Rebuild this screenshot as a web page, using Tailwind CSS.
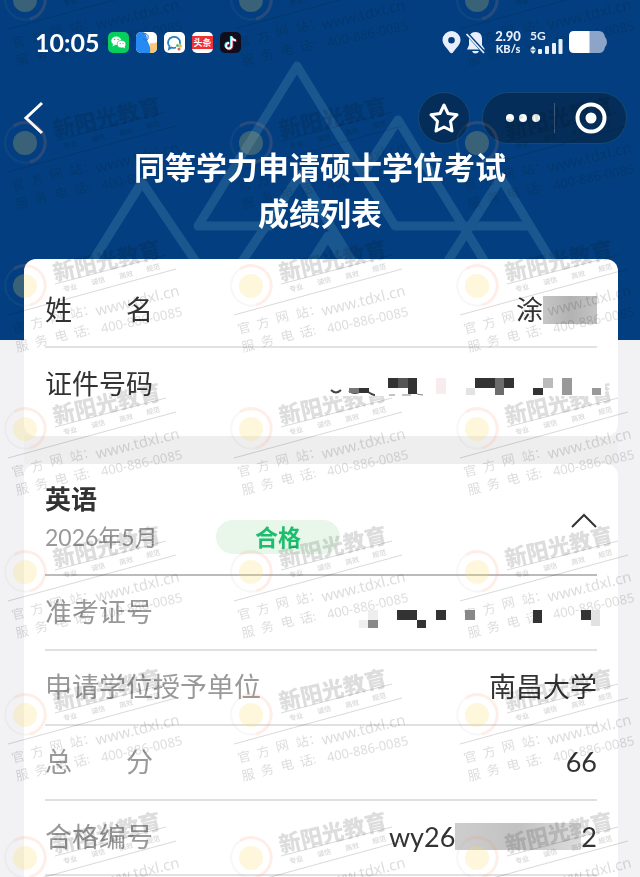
<!doctype html>
<html lang="zh-CN">
  <head>
    <meta charset="UTF-8" />
    <meta name="viewport" content="width=device-width, initial-scale=1.0" />
    <title>同等学力申请硕士学位考试成绩列表</title>
    <script src="https://cdn.jsdelivr.net/npm/@tailwindcss/browser@4"></script>
  </head>
  <body
    class="relative flex min-h-screen flex-col overflow-x-hidden bg-[#f2f2f4] font-['Lato','Noto_Sans_CJK_SC',sans-serif] text-[#333]"
  >
    <header class="relative bg-[#033f80] pb-[104px] text-white">
      <!-- triangle pattern behind the title -->
      <svg
        class="absolute inset-0 h-full w-full"
        viewBox="0 0 640 340"
        preserveAspectRatio="xMidYMin slice"
        fill="none"
        stroke="#1b578f"
        stroke-width="9"
        stroke-linejoin="round"
        aria-hidden="true"
      >
        <path d="M272 226H198L297 66L395 226H528" />
        <path d="M84 275L142 182L205 275" />
        <path d="M233 275L300 175L360 275" />
        <path d="M305 272L328 236L350 272" />
        <path d="M364 172L398 120L493 275" />
        <path d="M439 275L501 178L560 275" />
      </svg>

      <div class="relative z-20 flex h-[92px] items-center justify-between pr-[33px] pb-2 pl-[35px]">
        <div class="flex items-center gap-[7px]">
          <span class="mr-0.5 text-[25px] leading-none font-bold">10:05</span>
          <!-- WeChat -->
          <svg class="size-[21px]" viewBox="0 0 21 21">
            <rect width="21" height="21" rx="5" fill="#06cf5c" />
            <ellipse cx="8.300" cy="8.800" rx="5" ry="4.300" fill="#fff" />
            <path d="M5 12L4.500 14.500L7.500 12.800Z" fill="#fff" />
            <ellipse cx="13.500" cy="12.200" rx="4.300" ry="3.700" fill="#fff" stroke="#06cf5c" stroke-width=".7" />
            <path d="M15 15L17 16.500L16.500 14Z" fill="#fff" />
            <g fill="#06cf5c">
              <circle cx="6.700" cy="7.500" r=".7" />
              <circle cx="10" cy="7.500" r=".7" />
              <circle cx="12.200" cy="11.300" r=".6" />
              <circle cx="15" cy="11.300" r=".6" />
            </g>
          </svg>
          <svg class="size-[21px]" viewBox="0 0 21 21">
            <defs>
              <clipPath id="tile"><rect width="21" height="21" rx="5" /></clipPath>
            </defs>
            <g clip-path="url(#tile)">
              <rect width="21" height="21" fill="#fff" />
              <path d="M14 21V11Q18 12 21 10V21Z" fill="#f8c777" />
              <path d="M0 0H5C9 0 11 3 11 8C13 12 15 15 14 21H0Z" fill="#258bf3" />
              <path d="M6 1C10 1 13 3 12 6C12 9 8 9 7.500 6.500" fill="none" stroke="#2d6fc0" stroke-width="1" />
            </g>
          </svg>
          <svg class="size-[21px]" viewBox="0 0 21 21">
            <rect width="21" height="21" rx="5" fill="#fff" />
            <path d="M12 15.500Q9 16.500 7.500 15.500L5 17L5.500 14A6 5.500 0 1 1 16 11" fill="none" stroke="#257fc0" stroke-width="1.700" />
            <circle cx="13.500" cy="13.500" r="1.500" fill="#56bb62" />
            <circle cx="16.500" cy="14" r="1.500" fill="#f5b32d" />
            <circle cx="15" cy="17" r="1.500" fill="#e66048" />
            <circle cx="16" cy="11.800" r="1" fill="#36a3dc" />
          </svg>
          <svg class="size-[21px]" viewBox="0 0 21 21">
            <rect width="21" height="21" rx="5" fill="#fff" />
            <rect y="4" width="21" height="13" fill="#ed2f36" />
            <text x="10.500" y="14" text-anchor="middle" font-size="9" font-weight="700" fill="#fff">头条</text>
          </svg>
          <svg class="size-[21px]" viewBox="0 0 21 21" fill="none" stroke-width="2.200">
            <rect width="21" height="21" rx="5" fill="#120d1b" />
            <path d="M11 4V13.500A2.800 2.800 0 1 1 8.500 10.500M11 4.500Q12 8 15.500 8" stroke="#31dfe0" />
            <path d="M12.200 5V14.500A2.800 2.800 0 1 1 9.700 11.500M12.200 5.500Q13 8.800 16.500 8.800" stroke="#ee3057" />
            <path d="M11.600 4.500V14A2.800 2.800 0 1 1 9.100 11M11.600 5Q12.500 8.400 16 8.400" stroke="#fff" stroke-width="1.800" />
          </svg>
        </div>

        <div class="flex items-center gap-1 text-[#e8effa]">
          <svg class="h-[23px] w-[19px]" viewBox="0 0 19 23" fill="currentColor">
            <path fill-rule="evenodd" d="M9.500 0A9 9 0 0 1 18.500 9C18.500 14 13 18 11 21.500Q9.500 23 8 21.500C6 18 .5 14 .5 9A9 9 0 0 1 9.500 0ZM9.500 6A3.300 3.300 0 1 0 9.500 12.600A3.300 3.300 0 0 0 9.500 6Z" />
          </svg>
          <svg class="h-[23px] w-[21px]" viewBox="0 0 21 23">
            <path d="M10.500 1C15 1 17 4 17 8V14L20 18.500H2L4 14V8C4 4 6 1 10.500 1Z" fill="currentColor" />
            <path d="M7 20H14Q13 22.500 10.500 22.500T7 20Z" fill="currentColor" />
            <path d="M0 .5L20 22.500" stroke="#033f80" stroke-width="3.500" />
            <path d="M1.500 3L19 22" stroke="currentColor" stroke-width="1.700" />
          </svg>
          <div class="ml-1 flex w-7 flex-col items-center font-black whitespace-nowrap">
            <span class="text-[13px] leading-[13px]">2.90</span>
            <span class="text-[11px] leading-[11px]">KB/s</span>
          </div>
          <div class="ml-1 flex flex-col">
            <span class="text-[12px] leading-[12px] font-bold">5G</span>
            <svg class="-mt-1 h-[16px] w-[33px]" viewBox="0 0 33 16" fill="currentColor">
              <path d="M0 11.500L3 8L6 11.500ZM0 12.500L3 16L6 12.500Z" />
              <rect x="8" y="11" width="4" height="5" rx="1" />
              <rect x="15" y="8" width="4" height="8" rx="1" />
              <rect x="22" y="5" width="4" height="11" rx="1" />
              <rect x="28.500" y="1" width="4" height="15" rx="1" />
            </svg>
          </div>
          <svg class="ml-0.5 h-[22px] w-[38px]" viewBox="0 0 38 22">
            <path d="M20 0H30Q35 0 36 6Q38 8 38 11T36 16Q35 22 30 22H20Z" fill="#8ba4c7" />
            <path d="M20.500 0H5Q0 0 0 5V17Q0 22 5 22H20.500Z" fill="#fff" />
          </svg>
        </div>
      </div>

      <nav class="relative flex h-[52px] items-center pr-[13px] pl-[22px]">
        <button type="button" aria-label="返回">
          <svg class="h-[34px] w-[22px]" viewBox="0 0 22 34" fill="none" stroke="#fff" stroke-width="3">
            <path d="M20 2L4 17L20 32" />
          </svg>
        </button>
        <button
          type="button"
          aria-label="收藏"
          class="ml-auto flex size-[52px] items-center justify-center rounded-full border border-[#174875] bg-[#042e59]"
        >
          <svg class="size-8" viewBox="0 0 32 32" fill="none" stroke="#fff" stroke-width="3" stroke-linejoin="round">
            <path d="M16 3L20 11.500L29 12.800L22.500 19.300L24 29L16 25L8 29L9.500 19.300L3 12.800L12 11.500Z" />
          </svg>
        </button>
        <div class="ml-3 flex h-[52px] w-[145px] items-center rounded-full border border-[#174875] bg-[#042e59]">
          <button type="button" aria-label="更多" class="flex h-full w-[71px] items-center justify-center gap-[5px] pl-2">
            <span class="size-2 rounded-full bg-white"></span>
            <span class="size-2 rounded-full bg-white"></span>
            <span class="size-2 rounded-full bg-white"></span>
          </button>
          <span class="h-[30px] w-px bg-[#3a5c80]"></span>
          <button type="button" aria-label="关闭" class="flex h-full flex-1 items-center justify-center">
            <svg class="relative z-20 size-8" viewBox="0 0 32 32">
              <circle cx="16" cy="16" r="13.500" fill="none" stroke="#fff" stroke-width="4" />
              <circle cx="16" cy="16" r="5.500" fill="#fff" />
            </svg>
          </button>
        </div>
      </nav>

      <h1 class="relative z-20 text-center text-[31px] leading-[46px] font-bold">
        同等学力申请硕士学位考试<br />成绩列表
      </h1>
    </header>

    <main class="relative -mt-[81px] flex flex-1 flex-col pr-[22px] pl-6">
      <section class="rounded-xl bg-white px-[21px] pt-[14px] pb-[17px]">
        <dl class="text-[27px] leading-10">
          <div class="flex h-[75px] items-center justify-between border-b-2 border-[#e2e2e2]">
            <dt class="flex w-[108px] justify-between"><span>姓</span><span>名</span></dt>
            <dd class="flex items-center">
              涂<span class="h-7 w-[54px] bg-linear-to-r from-[#c6c6c6] via-[#b2b2b2] to-[#c4c4c4]"></span>
            </dd>
          </div>
          <div class="flex h-[71px] items-center justify-between">
            <dt>证件号码</dt>
            <dd class="relative z-20 -mr-2">
              <svg class="h-7 w-[278px]" viewBox="0 2 278 28" aria-label="已隐藏">
                <rect width="278" height="28" fill="#fff" />
                <path d="M4 22Q9 27 14 22M22 23Q28 27 34 23M40 23Q45 27 48 27" fill="none" stroke="#444" stroke-width="2" />
                <path d="M62 27H68M75 27H84M90 26Q95 27 96 27" stroke="#888" />
                <path d="M22 20H32V25H22Z" fill="#777" />
                <path d="M32 20H42V25H32ZM61 10H71V20H61ZM81 10H90V26H81ZM148 10H168V20H148ZM177 10H187V20H177ZM206 20H216V27H206Z" fill="#333" />
                <path d="M71 10H81V20H71Z" fill="#555" />
                <path d="M109 10H119V26H109Z" fill="#f7ecee" />
                <path d="M139 20H148V27H139Z" fill="#e3e3e3" />
                <path d="M168 10H177V27H168Z" fill="#6c6c6c" />
                <path d="M216 10H226V20H216Z" fill="#bbb" />
                <path d="M235 10H245V27H235ZM265 20H274V27H265Z" fill="#999" />
              </svg>
            </dd>
          </div>
        </dl>
      </section>

      <div class="h-7 bg-[#eeeeef]"></div>

      <section class="flex-1 rounded-t-xl bg-white px-[21px]">
        <div class="flex h-[112px] items-center border-b-2 border-[#bbb] pb-1">
          <div class="flex-1">
            <h2 class="text-[26px] leading-10 font-bold">英语</h2>
            <div class="flex items-center">
              <p class="w-[171px] text-[23px] leading-9 text-[#999]">2026年5月</p>
              <span class="w-[124px] rounded-full bg-[#e8f7e9] text-center text-[23px] leading-[34px] font-bold text-[#1cbe6e]">合格</span>
            </div>
          </div>
          <button type="button" aria-label="收起" class="pt-2">
            <svg class="h-4 w-[26px]" viewBox="0 0 26 16" fill="none" stroke="#333" stroke-width="2">
              <path d="M1 14L13 2L25 14" />
            </svg>
          </button>
        </div>
        <dl class="text-[27px] leading-10">
          <div class="flex h-[75px] items-center justify-between border-b-2 border-[#e0e0e0] pb-0.5">
            <dt class="text-[#999]">准考证号</dt>
            <dd class="relative z-20 -mr-1">
              <svg class="h-8 w-[246px]" viewBox="0 -10 246 32" aria-label="已隐藏">
                <path d="M13 4H23V14H13ZM4 14H13V23H4Z" fill="#eee" />
                <path d="M13 14H23V23H13ZM110 4H120V14H110Z" fill="#888" />
                <path d="M42 4H62V14H42ZM62 14H71V23H62ZM81 4H91V14H81ZM178 4H187V17H178ZM226 4H236V14H226Z" fill="#333" />
                <path d="M236 4H245V20H236Z" fill="#e2e2e2" />
              </svg>
            </dd>
          </div>
          <div class="flex h-[75px] items-center justify-between border-b-2 border-[#e0e0e0] pb-0.5">
            <dt class="text-[#999]">申请学位授予单位</dt>
            <dd>南昌大学</dd>
          </div>
          <div class="flex h-[75px] items-center justify-between border-b-2 border-[#e0e0e0] pb-0.5">
            <dt class="flex w-[108px] justify-between text-[#999]"><span>总</span><span>分</span></dt>
            <dd>66</dd>
          </div>
          <div class="flex h-[75px] items-center justify-between border-b-2 border-[#e0e0e0] pb-0.5">
            <dt class="text-[#999]">合格编号</dt>
            <dd class="flex items-center">
              wy26<span class="h-[27px] w-[126px] bg-linear-to-r from-[#cdcdcd] via-[#c2c2c2] to-[#dcdcdc]"></span>2
            </dd>
          </div>
        </dl>
      </section>
    </main>

    <!-- repeated watermark: logo layer, then lettering -->
    <svg class="pointer-events-none absolute inset-0 z-10 h-full w-full" aria-hidden="true">
      <defs>
        <pattern id="logo" width="226" height="143" patternUnits="userSpaceOnUse" patternTransform="translate(0 -61)">
          <circle cx="25" cy="61" r="12" fill="#f8d95a" opacity=".22" />
          <path d="M14 44A20 20 0 1 1 30 80" fill="none" stroke="#f58a60" stroke-width="3" opacity=".15" />
          <path d="M30 80A20 20 0 0 1 14 44" fill="none" stroke="#999" stroke-width="2" opacity=".08" />
        </pattern>
      </defs>
      <rect width="100%" height="100%" fill="url(#logo)" />
    </svg>
    <svg class="pointer-events-none absolute inset-0 z-10 h-full w-full mix-blend-multiply" aria-hidden="true">
      <defs>
        <pattern id="wm" width="226" height="143" patternUnits="userSpaceOnUse" patternTransform="translate(0 -61)">
          <g fill="#808080" opacity=".27">
            <text transform="translate(55 56) rotate(-13)" font-size="22" font-weight="900">新阳光教育</text>
            <g font-size="7" font-weight="700">
              <text transform="translate(64 67) rotate(-14)">专业</text>
              <text transform="translate(92 60) rotate(-14)">诚信</text>
              <text transform="translate(120 54) rotate(-14)">高效</text>
              <text transform="translate(147 47) rotate(-14)">规范</text>
            </g>
            <g font-size="13">
              <text transform="translate(13 109) rotate(-14)">官</text>
              <text transform="translate(32 104) rotate(-14)">方</text>
              <text transform="translate(51 98) rotate(-14)">网</text>
              <text transform="translate(71 94) rotate(-14)">站：</text>
              <text transform="translate(17 127) rotate(-14)">服</text>
              <text transform="translate(36 122) rotate(-14)">务</text>
              <text transform="translate(56 117) rotate(-14)">电</text>
              <text transform="translate(75 113) rotate(-14)">话:</text>
            </g>
            <text class="font-['Noto_Sans']" transform="translate(97 91) rotate(-14)" font-size="15">www.tdxl.cn</text>
            <text class="font-['Noto_Sans']" transform="translate(102 108) rotate(-12)" font-size="13">400-886-0085</text>
          </g>
          <path d="M8 90L176 44M55 59L166 30" stroke="#808080" opacity=".3" />
        </pattern>
      </defs>
      <rect width="100%" height="100%" fill="url(#wm)" />
    </svg>
  </body>
</html>
